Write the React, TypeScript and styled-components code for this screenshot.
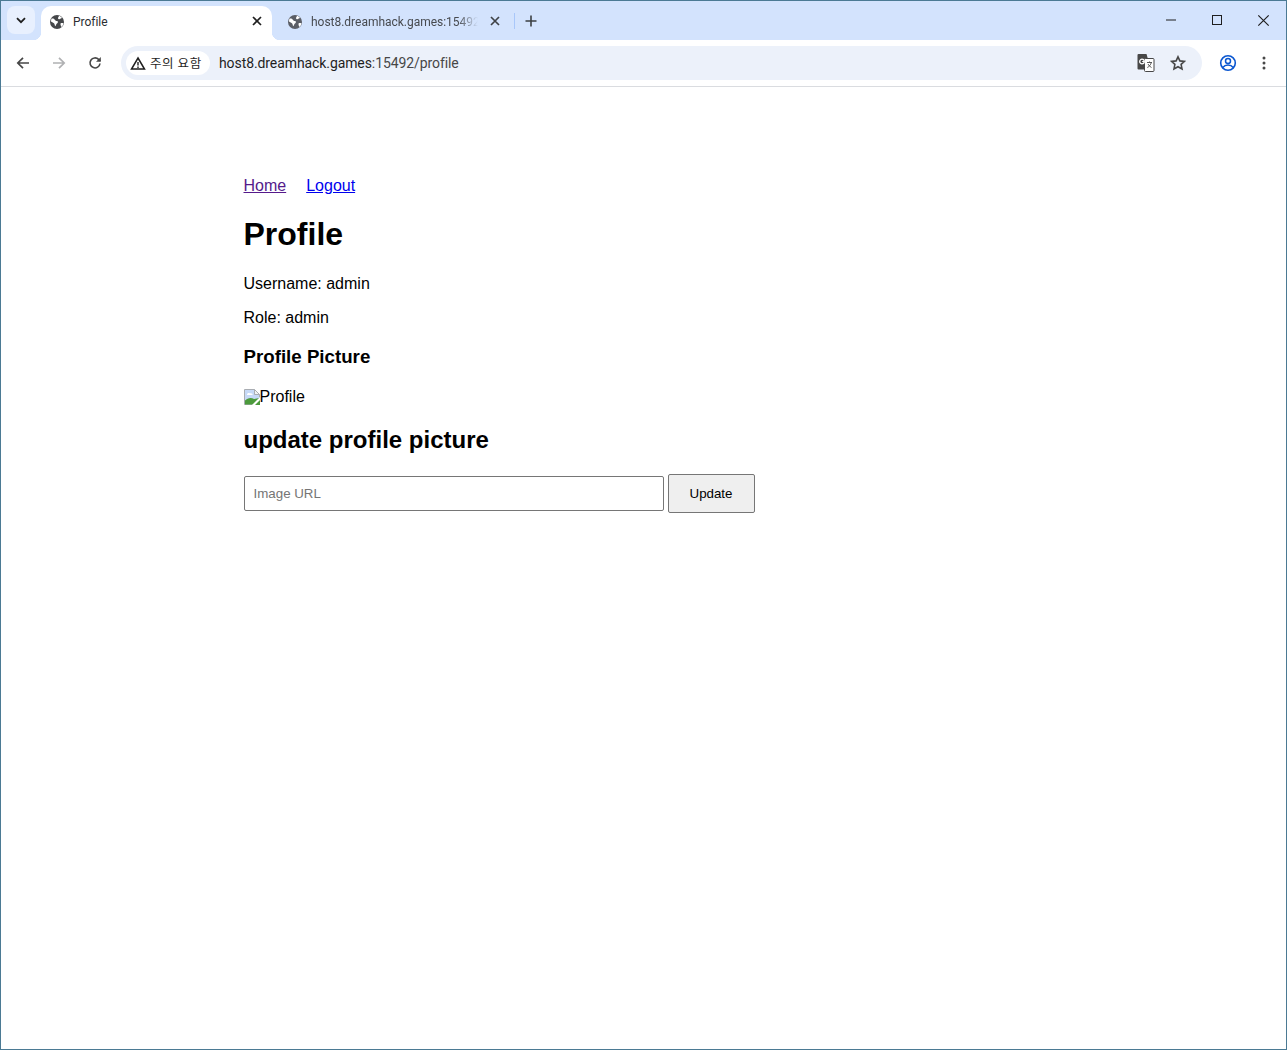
import React from "react";
import styled, { createGlobalStyle } from "styled-components";

const Global = createGlobalStyle`
  html, body { margin: 0; padding: 0; background: #fff; }
  #root { height: 1050px; }
`;

const Win = styled.div`
  box-sizing: border-box; width: 1287px; height: 1050px;
  border: 1px solid #4b7a94; display: flex; flex-direction: column;
  background: #fff; font-family: "Liberation Sans", Arial, sans-serif; overflow: hidden;
`;
const TabStrip = styled.div`
  height: 39px; flex: none; background: #d3e3fd; display: flex; align-items: flex-end; position: relative;
`;
const TabSearch = styled.div`
  width: 28px; height: 28px; margin: 0 6px 6px 6px; border-radius: 8px; background: #e8f0fe;
  display: flex; align-items: center; justify-content: center; flex: none;
`;
const ActiveTab = styled.div`
  position: relative; width: 231px; height: 34px; box-sizing: border-box; background: #fff; border-radius: 10px 10px 0 0;
  display: flex; align-items: center; padding: 0 7px 3px 8px; flex: none;
  &::before, &::after { content: ""; position: absolute; bottom: 0; width: 8px; height: 8px; }
  &::before { left: -8px; background: radial-gradient(circle at 0 0, transparent 8px, #fff 8.5px); }
  &::after { right: -8px; background: radial-gradient(circle at 100% 0, transparent 8px, #fff 8.5px); }
`;
const InactiveTab = styled.div`
  width: 237px; height: 34px; box-sizing: border-box; display: flex; align-items: center; padding: 0 6px 3px 15px; flex: none;
`;
const TabTitle = styled.span<{ $muted?: boolean }>`
  flex: 1; margin-left: 8px; margin-right: ${p => (p.$muted ? 9 : 0)}px; font: 12px "Roboto", "Noto Sans", sans-serif; white-space: nowrap; overflow: hidden;
  color: ${p => (p.$muted ? "#474a4f" : "#2b2d30")}; letter-spacing: -0.02px;
  ${p => p.$muted && "-webkit-mask-image: linear-gradient(90deg,#000 88%,transparent 100%);"}
`;
const TabClose = styled.div`
  width: 16px; height: 16px; margin-top: -2px; display: flex; align-items: center; justify-content: center; flex: none;
`;
const TabDivider = styled.div`
  width: 1px; height: 16px; background: #a8c7fa; margin: 0 0 11px 5px; flex: none;
`;
const NewTab = styled.div`
  width: 16px; height: 16px; margin: 0 0 11px 8px; display: flex; align-items: center; justify-content: center; flex: none;
`;
const WinControls = styled.div`
  margin-left: auto; display: flex; align-items: center; height: 38px; align-self: flex-start; flex: none;
`;
const WinButton = styled.div`
  width: 46px; height: 38px; display: flex; align-items: center; justify-content: center;
`;
const Toolbar = styled.div`
  height: 47px; flex: none; box-sizing: border-box; border-bottom: 1px solid #dadce0; background: #fff;
  display: flex; align-items: center; padding: 0 5px 0 4px;
`;
const NavIcon = styled.div<{ $gap?: number }>`
  width: 36px; height: 36px; margin-left: ${p => p.$gap ?? 0}px; display: flex; align-items: center; justify-content: center; flex: none;
`;
const Omnibox = styled.div`
  margin-left: 8px; width: 1081px; height: 34px; border-radius: 17px; background: #ecf1fa; flex: none;
  display: flex; align-items: center; padding: 0 8px 0 5px; box-sizing: border-box;
`;
const Chip = styled.div`
  height: 24px; width: 84px; border-radius: 12px; background: #fff; display: flex; align-items: center; box-sizing: border-box; padding-left: 4px; flex: none;
`;
const ChipText = styled.span`
  margin: -2px 0 0 4px; font: 12.5px "Noto Sans CJK KR", sans-serif; color: #1f1f1f; white-space: nowrap; letter-spacing: 0.6px;
`;
const Url = styled.div`
  margin-left: 9px; font: 14px "Roboto", sans-serif; color: #1f1f1f; flex: 1; white-space: nowrap; letter-spacing: -0.09px;
`;
const UrlRest = styled.span` color: #474747; `;
const OmniIcon = styled.div`
  width: 32px; height: 32px; display: flex; align-items: center; justify-content: center; flex: none;
`;
const Main = styled.main`
  width: 800px; margin: 0 auto; padding-top: 90px; color: #000; font-size: 16px; flex: 1; box-sizing: border-box;
`;
const Nav = styled.nav`
  display: flex; gap: 20px; line-height: 18px;
`;
const Link = styled.a<{ $visited?: boolean }>`
  color: ${p => (p.$visited ? "#551a8b" : "#0000ee")}; text-decoration: underline;
`;
const H1 = styled.h1` font-size: 32px; line-height: 37px; margin: 21px 0 22px; `;
const P = styled.p` margin: 16px 0; line-height: 18px; `;
const H3 = styled.h3` font-size: 18.72px; line-height: 21px; margin: 19px 0 21px; `;
const ImgLine = styled.div` display: flex; align-items: flex-start; line-height: 18px; margin: 16px 0; height: 18px; `;
const BrokenIcon = styled.svg` margin-top: 1px; flex: none; `;
const H2 = styled.h2` font-size: 24px; line-height: 28px; margin: 20px 0; `;
const Form = styled.form` display: flex; align-items: center; gap: 4px; `;
const Input = styled.input`
  box-sizing: border-box; width: 420px; height: 35px; padding: 0 9px; border: 1px solid #767676; border-radius: 2px;
  font: 13.333px "Liberation Sans", Arial, sans-serif; background: #fff;
  &::placeholder { color: #757575; opacity: 1; }
`;
const Button = styled.button`
  box-sizing: border-box; width: 87px; height: 39px; border: 1px solid #767676; border-radius: 2px; background: #efefef;
  font: 13.333px "Liberation Sans", Arial, sans-serif; color: #000; padding: 0;
`;

const Globe = ({ c }: { c: string }) => (
  <svg width="16" height="16" viewBox="0 0 16 16">
    <circle cx="8" cy="8" r="7" fill={c} />
    <path d="M2.6 4.6c1.5-.3 2.6.2 3.2 1.2.5.9 1.3 1.2 2.2 1.2.9.1 1.2.9.7 1.7-.5.7-1.2 1-1.5 1.9-.2.7-.5 1.3-1 1.6-.6-.9-.4-2-1-2.8C4.600 8.500 3 8 2 7.400c0-1 .2-2 .6-2.800zM10 1.700c1.300.4 2.400 1.200 3.100 2.300-.7.100-1.300.3-1.700.8-.5.600-1.400.700-2 .1-.5-.5-.5-1.200-.1-1.700.4-.4.700-.8.700-1.500zM11.700 9.300c.7-.3 1.900-.3 2.800.1-.3 1.400-1 2.600-2.100 3.500-.6-.9-1.300-2.800-.7-3.600z" fill="#fff" />
  </svg>
);
const X = ({ c, w = 1.7, s = 10 }: { c: string; w?: number; s?: number }) => (
  <svg width={s} height={s} viewBox="0 0 10 10"><path d="M1 1l8 8M9 1l-8 8" stroke={c} strokeWidth={w} fill="none" /></svg>
);

export default function App() {
  return (
    <Win>
      <Global />
      <TabStrip>
        <TabSearch>
          <svg width="10" height="7" viewBox="0 0 10 7"><path d="M1 1.200l4 4 4-4" stroke="#1f1f1f" strokeWidth="1.800" fill="none" /></svg>
        </TabSearch>
        <ActiveTab>
          <Globe c="#45474a" />
          <TabTitle>Profile</TabTitle>
          <TabClose><X c="#1f1f1f" /></TabClose>
        </ActiveTab>
        <InactiveTab>
          <Globe c="#5b5e66" />
          <TabTitle $muted>host8.dreamhack.games:15492/profile</TabTitle>
          <TabClose><X c="#3f4246" /></TabClose>
        </InactiveTab>
        <TabDivider />
        <NewTab>
          <svg width="12" height="12" viewBox="0 0 12 12"><path d="M6 .5v11M.5 6h11" stroke="#3c4043" strokeWidth="1.600" fill="none" /></svg>
        </NewTab>
        <WinControls>
          <WinButton><svg width="10" height="2" viewBox="0 0 10 2"><path d="M0 1h10" stroke="#1f1f1f" strokeWidth="1" /></svg></WinButton>
          <WinButton><svg width="10" height="10" viewBox="0 0 10 10"><rect x=".5" y=".5" width="9" height="9" fill="none" stroke="#1f1f1f" /></svg></WinButton>
          <WinButton><X c="#1f1f1f" w={0.9} s={13} /></WinButton>
        </WinControls>
      </TabStrip>
      <Toolbar>
        <NavIcon>
          <svg width="14" height="14" viewBox="0 0 14 14"><path d="M13 7H2M7 1.800L1.800 7 7 12.200" stroke="#474747" strokeWidth="1.700" fill="none" /></svg>
        </NavIcon>
        <NavIcon>
          <svg width="14" height="14" viewBox="0 0 14 14"><path d="M1 7h11M7 1.800L12.200 7 7 12.200" stroke="#b0b1b3" strokeWidth="1.700" fill="none" /></svg>
        </NavIcon>
        <NavIcon>
          <svg width="14" height="14" viewBox="0 0 14 14"><path d="M12 7.500A5 5 0 1 1 10.600 3.400L12.300 5" stroke="#474747" strokeWidth="1.600" fill="none" /><path d="M12.800 1v4.800H8z" fill="#474747" /></svg>
        </NavIcon>
        <Omnibox>
          <Chip>
            <svg width="16" height="15" viewBox="0 0 16 15"><path d="M8 2L14.500 13H1.500z" fill="none" stroke="#1f1f1f" strokeWidth="1.500" /><path d="M8 6v3.500M8 10.500v1.500" stroke="#1f1f1f" strokeWidth="1.400" /></svg>
            <ChipText>주의 요함</ChipText>
          </Chip>
          <Url>host8.dreamhack.games<UrlRest>:15492/profile</UrlRest></Url>
          <OmniIcon>
            <svg width="18" height="18" viewBox="0 0 18 18">
              <path d="M1.500 0h8l4 14H7.500l-.5 1.500H1.500a1 1 0 0 1-1-1V1a1 1 0 0 1 1-1z" fill="#474747" />
              <rect x="7.500" y="4.500" width="9.500" height="13" rx="1" fill="#fff" stroke="#474747" />
              <circle cx="5" cy="7.500" r="2.300" fill="none" stroke="#fff" strokeWidth="1.300" />
              <path d="M5.200 7.500h2" stroke="#fff" strokeWidth="1" />
              <path d="M10 8.500h5M12.500 7.500v1M14.300 8.500c-.6 2.500-2 4-4 5M11 10c.8 1.500 2 2.800 3.500 3.500" stroke="#474747" strokeWidth=".9" fill="none" />
            </svg>
          </OmniIcon>
          <OmniIcon>
            <svg width="16" height="16" viewBox="0 0 16 16"><path d="M8 1.800l1.900 4.100 4.500.5-3.300 3 .9 4.500L8 11.700l-4 2.200.9-4.500-3.300-3 4.500-.5z" fill="none" stroke="#474747" strokeWidth="1.600" /></svg>
          </OmniIcon>
        </Omnibox>
        <NavIcon $gap={8}>
          <svg width="18" height="18" viewBox="0 0 18 18"><circle cx="9" cy="9" r="7.300" fill="none" stroke="#0b57d0" strokeWidth="1.600" /><circle cx="9" cy="7" r="2.500" fill="none" stroke="#0b57d0" strokeWidth="1.500" /><path d="M3.800 13.500c1.500-2 3.300-2.500 5.200-2.500s3.700.5 5.200 2.500" fill="none" stroke="#0b57d0" strokeWidth="1.500" /></svg>
        </NavIcon>
        <NavIcon>
          <svg width="4" height="14" viewBox="0 0 4 14"><circle cx="2" cy="2" r="1.500" fill="#474747" /><circle cx="2" cy="7" r="1.500" fill="#474747" /><circle cx="2" cy="12" r="1.500" fill="#474747" /></svg>
        </NavIcon>
      </Toolbar>
      <Main>
        <Nav>
          <Link $visited href="#">Home</Link>
          <Link href="#">Logout</Link>
        </Nav>
        <H1>Profile</H1>
        <P>Username: admin</P>
        <P>Role: admin</P>
        <H3>Profile Picture</H3>
        <ImgLine>
          <BrokenIcon width="16" height="16" viewBox="0 0 16 16">
            <path d="M.5.500h10l5 5v3L9 15.500H.5z" fill="#c6d9f7" stroke="#a9adb2" />
            <path d="M10.500.500v5h5z" fill="#f1f3f4" stroke="#a9adb2" />
            <path d="M3 6c0-2 2-2.500 3-1.500 1.500-.5 3 .5 2.500 1.500z" fill="#fff" />
            <path d="M1 15.500v-4c2.500-2.500 6-3.500 9-1.500L15.500 9v3l-3.500 3.500z" fill="#4c9a3c" />
            <path d="M16 8l-8 8h8z" fill="#fff" />
            <path d="M11 16l5-5v5z" fill="#4c9a3c" />
          </BrokenIcon>
          <span>Profile</span>
        </ImgLine>
        <H2>update profile picture</H2>
        <Form onSubmit={e => e.preventDefault()}>
          <Input placeholder="Image URL" />
          <Button type="submit">Update</Button>
        </Form>
      </Main>
    </Win>
  );
}
